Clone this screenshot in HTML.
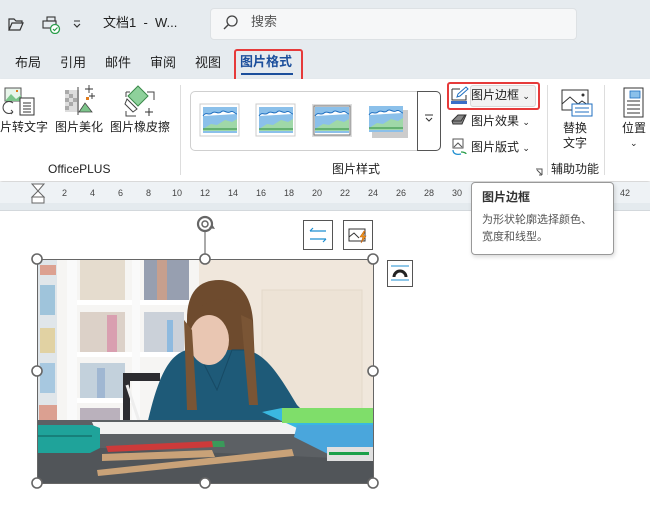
<!DOCTYPE html>
<html><head><meta charset="utf-8"><style>
*{margin:0;padding:0;box-sizing:border-box}
body{width:650px;height:506px;overflow:hidden;position:relative;background:#fff;font-family:"Liberation Sans","Noto Sans CJK SC",sans-serif;color:#222}
.abs{position:absolute}
.t{position:absolute;font-size:12px;white-space:nowrap;line-height:14px}
</style></head><body>
<div class="abs" style="left:0;top:0;width:650px;height:79px;background:#e6ebef"></div>
<svg class="abs" style="left:6px;top:14px" width="90" height="20">
<path d="M3 5h5l2 2h6v2H6l-3 7V5z M3 16l3-7h11l-3 7z" fill="none" stroke="#333" stroke-width="1.2"/>
<rect x="41" y="3" width="8" height="4" fill="none" stroke="#333" stroke-width="1.1"/>
<rect x="37" y="7" width="13" height="7" fill="none" stroke="#333" stroke-width="1.1"/>
<circle cx="49" cy="15" r="4.5" fill="#fff" stroke="#2a9d4a" stroke-width="1.3"/>
<path d="M47 15l1.5 1.5 3-3" fill="none" stroke="#2a9d4a" stroke-width="1.2"/>
<path d="M68 7h6" stroke="#333"/><path d="M68 10l3 3 3-3" fill="none" stroke="#333" stroke-width="1.2"/>
</svg>
<div class="t" style="left:103px;top:16px;font-size:13px">文档1 &nbsp;- &nbsp;W...</div>
<div class="abs" style="left:210px;top:8px;width:367px;height:32px;background:#f6f7f8;border:1px solid #dde1e4;border-radius:4px"></div>
<svg class="abs" style="left:222px;top:14px" width="18" height="18"><circle cx="10" cy="7" r="5" fill="none" stroke="#444" stroke-width="1.3"/><path d="M6.5 10.5L2 15" stroke="#444" stroke-width="1.4"/></svg>
<div class="t" style="left:251px;top:15px;font-size:13px;color:#555">搜索</div>
<div class="t" style="left:15px;top:56px;font-size:13px">布局</div>
<div class="t" style="left:60px;top:56px;font-size:13px">引用</div>
<div class="t" style="left:105px;top:56px;font-size:13px">邮件</div>
<div class="t" style="left:150px;top:56px;font-size:13px">审阅</div>
<div class="t" style="left:195px;top:56px;font-size:13px">视图</div>
<div class="t" style="left:240px;top:55px;font-size:13px;font-weight:bold;color:#1c4f9c">图片格式</div>
<div class="abs" style="left:241px;top:73px;width:52px;height:2px;background:#1c4f9c"></div>
<div class="abs" style="left:234px;top:49px;width:69px;height:36px;border:2px solid #e63a3a;border-radius:3px"></div>
<div class="abs" style="left:0;top:79px;width:650px;height:102px;background:#fff;box-shadow:0 2px 3px rgba(0,0,0,.18)"></div>
<svg class="abs" style="left:0;top:84px" width="180" height="36">
<rect x="5" y="4" width="16" height="13" fill="#e8f5ea" stroke="#555"/>
<path d="M5 17l6-7 5 5 5-4v6z" fill="#7cc48a"/>
<rect x="16" y="6" width="2" height="2" fill="#e07a1a"/>
<path d="M13 19a6 6 0 1 0 0 9M13 28l-2-2M13 28l-2 2" fill="none" stroke="#444"/>
<rect x="20" y="14" width="14" height="17" fill="#fff" stroke="#333"/>
<path d="M23 19h8M23 22h8M23 25h8M23 28h8" stroke="#333"/>
<rect x="65" y="6" width="14" height="22" fill="#ddd"/><rect x="65" y="6" width="4" height="4" fill="#aaa"/><rect x="69" y="10" width="4" height="4" fill="#aaa"/><rect x="65" y="14" width="4" height="4" fill="#aaa"/><rect x="73" y="14" width="4" height="4" fill="#aaa"/><rect x="69" y="18" width="4" height="4" fill="#aaa"/><rect x="65" y="22" width="4" height="4" fill="#aaa"/>
<path d="M78 3v28" stroke="#444"/><path d="M79 28l6-9 7 9z" fill="#7cc48a" stroke="#444" stroke-width=".8"/>
<rect x="86" y="13" width="3" height="3" fill="#e07a1a"/>
<path d="M89 1v8M85 5h8M92 9v6M89 12h6" stroke="#333" stroke-width=".9"/>
<path d="M126 8h4M126 8v5M147 8h7v8M126 27v5h10" fill="none" stroke="#444"/>
<path d="M128 12l10-10 10 10-10 10z" fill="#8ed19b" stroke="#3a8a4a"/>
<path d="M127 15l10 10-4 3-8-8z" fill="#fff" stroke="#444"/>
<path d="M149 24v8M145 28h8" stroke="#333"/>
</svg>
<div class="t" style="left:0;top:120px;font-size:12px">片转文字</div>
<div class="t" style="left:55px;top:120px;font-size:12px">图片美化</div>
<div class="t" style="left:110px;top:120px;font-size:12px">图片橡皮擦</div>
<div class="t" style="left:48px;top:162px;font-size:12px">OfficePLUS</div>
<div class="abs" style="left:180px;top:85px;width:1px;height:90px;background:#ddd"></div>
<div class="abs" style="left:190px;top:91px;width:251px;height:60px;border:1px solid #cfcfcf;border-radius:5px"></div>
<div class="abs" style="left:417px;top:91px;width:24px;height:60px;border:1px solid #555;border-radius:0 5px 5px 0;background:#fff"></div>
<svg class="abs" style="left:423px;top:113px" width="12" height="10"><path d="M2 2h8M3 5l3 3 3-3" fill="none" stroke="#333"/></svg>
<svg class="abs" style="left:195px;top:100px" width="220" height="42">
<defs><g id="pic"><rect x="0" y="0" width="34" height="26" fill="#8bc0ea"/><path d="M0 9c3-5 6 0 9-3s6 2 9-1 6 2 9 0 5 2 7 2" fill="#fff" stroke="#1f6fc0" stroke-width="1"/><path d="M0 22l8-5 6 1 8-5 7 2 5-3v12H0z" fill="#9fd8a8"/><path d="M0 22h34" stroke="#2a8a3a" stroke-width="1"/></g></defs>
<rect x="5" y="4" width="39" height="32" fill="#fff" stroke="#ccc"/><use href="#pic" x="8" y="7"/>
<rect x="61" y="4" width="39" height="32" fill="#fff" stroke="#ccc"/><use href="#pic" x="64" y="7"/>
<rect x="117" y="4" width="40" height="33" fill="#ddd"/><rect x="119" y="6" width="36" height="29" fill="#fff" stroke="#777"/><use href="#pic" x="120" y="7"/>
<rect x="177" y="10" width="36" height="28" fill="#ccc"/><use href="#pic" x="174" y="6"/>
</svg>
<div class="t" style="left:332px;top:162px">图片样式</div>
<div class="abs" style="left:447px;top:82px;width:93px;height:28px;border:2px solid #e63a3a;border-radius:3px"></div>
<div class="abs" style="left:470px;top:85px;width:66px;height:22px;background:#f2f2f2;border:1px solid #d8d8d8;border-radius:3px"></div>
<svg class="abs" style="left:450px;top:86px" width="20" height="20"><path d="M2 3h8M2 3v11h14V9" fill="none" stroke="#333"/><path d="M7 11l1-3 8-7 2 2-8 7z" fill="#fff" stroke="#1f6fc0"/><rect x="1" y="15" width="16" height="3" fill="#3a6fc8"/></svg>
<div class="t" style="left:471px;top:88px">图片边框 <span style="font-size:9px">⌄</span></div>
<svg class="abs" style="left:450px;top:112px" width="18" height="16"><path d="M2 9l6-6h8l-4 9H3z" fill="#888" stroke="#333"/><path d="M2 9h9l4-6" fill="none" stroke="#333"/></svg>
<div class="t" style="left:471px;top:114px">图片效果 <span style="font-size:9px">⌄</span></div>
<svg class="abs" style="left:450px;top:137px" width="18" height="20"><rect x="3" y="2" width="10" height="9" fill="#fff" stroke="#555"/><path d="M4 10l4-4 4 4" fill="none" stroke="#555"/><path d="M3 13c0 4 4 5 8 4" fill="none" stroke="#1f8fd0" stroke-width="1.3"/><path d="M11 15c3 0 5 1 5 2" fill="none" stroke="#2a9d4a" stroke-width="1.3"/></svg>
<div class="t" style="left:471px;top:140px">图片版式 <span style="font-size:9px">⌄</span></div>
<svg class="abs" style="left:535px;top:168px" width="8" height="8"><path d="M1 1h6v6M2 2l5 5M4 7h3" fill="none" stroke="#555"/></svg>
<div class="abs" style="left:547px;top:85px;width:1px;height:90px;background:#ddd"></div>
<svg class="abs" style="left:560px;top:88px" width="34" height="30"><rect x="2" y="2" width="26" height="20" fill="#fff" stroke="#333"/><path d="M2 16l8-7 8 7 4-3 6 4" fill="none" stroke="#333"/><circle cx="23" cy="7" r="1.5" fill="#333"/><rect x="12" y="16" width="20" height="12" fill="#fff" stroke="#1f6fc0"/><path d="M15 20h14M15 24h14" stroke="#1f6fc0"/></svg>
<div class="t" style="left:563px;top:121px;font-size:12px">替换</div>
<div class="t" style="left:563px;top:136px;font-size:12px">文字</div>
<div class="t" style="left:551px;top:162px">辅助功能</div>
<div class="abs" style="left:604px;top:85px;width:1px;height:90px;background:#ddd"></div>
<svg class="abs" style="left:622px;top:87px" width="24" height="32"><rect x="2" y="1" width="19" height="29" fill="#fff" stroke="#333"/><rect x="8" y="4" width="10" height="7" fill="#8bc0ea" stroke="#1f6fc0" stroke-width=".8"/><path d="M5 14h13M5 18h13M5 22h13M5 26h13" stroke="#333"/></svg>
<div class="t" style="left:622px;top:121px;font-size:12px">位置</div>
<div class="t" style="left:630px;top:136px;font-size:9px">⌄</div>
<div class="abs" style="left:0;top:182px;width:650px;height:28px;background:#e4eaee"></div>
<div class="abs" style="left:0;top:182px;width:650px;height:21px;background:#eef2f5"></div>
<div class="abs" style="left:0;top:210px;width:650px;height:1px;background:#d3d8dc"></div>
<svg class="abs" style="left:30px;top:183px" width="16" height="28"><path d="M2 1h12l-6 7z M2 14l6-6 6 6z" fill="#fff" stroke="#666"/><rect x="2" y="14" width="12" height="6" fill="#fff" stroke="#666"/></svg>
<div class="abs" style="left:0;top:188px;font-size:9px;color:#444">
<span class="abs" style="left:62px">2</span><span class="abs" style="left:90px">4</span><span class="abs" style="left:118px">6</span><span class="abs" style="left:146px">8</span><span class="abs" style="left:172px">10</span><span class="abs" style="left:200px">12</span><span class="abs" style="left:228px">14</span><span class="abs" style="left:256px">16</span><span class="abs" style="left:284px">18</span><span class="abs" style="left:312px">20</span><span class="abs" style="left:340px">22</span><span class="abs" style="left:368px">24</span><span class="abs" style="left:396px">26</span><span class="abs" style="left:424px">28</span><span class="abs" style="left:452px">30</span><span class="abs" style="left:620px">42</span>
</div>
<div class="abs" style="left:471px;top:182px;width:143px;height:73px;background:#fff;border:1px solid #999;border-radius:4px;box-shadow:1px 2px 4px rgba(0,0,0,.15)"></div>
<div class="t" style="left:482px;top:190px;font-weight:bold;color:#333">图片边框</div>
<div class="t" style="left:482px;top:213px;font-size:11px;color:#555">为形状轮廓选择颜色、</div>
<div class="t" style="left:482px;top:230px;font-size:11px;color:#555">宽度和线型。</div>
<div class="abs" style="left:303px;top:220px;width:30px;height:30px;border:1px solid #555;background:#fff"></div>
<svg class="abs" style="left:308px;top:227px" width="20" height="16"><path d="M2 4h16M2 4l3-3M2 12h16M18 12l-3 3" fill="none" stroke="#1f8fd0" stroke-width="1.2"/></svg>
<div class="abs" style="left:343px;top:220px;width:30px;height:30px;border:1px solid #555;background:#fff"></div>
<svg class="abs" style="left:348px;top:227px" width="22" height="18"><rect x="1" y="2" width="16" height="12" fill="#fff" stroke="#333"/><path d="M1 10l5-4 5 5" fill="none" stroke="#333"/><path d="M16 4l-4 6h3l-2 6 5-7h-3l2-5z" fill="#f29b1a" stroke="#c06010" stroke-width=".6"/></svg>
<div class="abs" style="left:387px;top:260px;width:26px;height:27px;border:1px solid #555;background:#fff"></div>
<svg class="abs" style="left:390px;top:263px" width="20" height="20"><path d="M1 3h18M1 17h18" stroke="#1f8fd0"/><path d="M4 14a6 6 0 0 1 12 0" fill="none" stroke="#222" stroke-width="3"/></svg>
<svg class="abs" style="left:194px;top:212px" width="24" height="48"><circle cx="11" cy="12" r="7" fill="none" stroke="#666" stroke-width="2.2"/><circle cx="11" cy="12" r="3" fill="none" stroke="#666" stroke-width="1.5"/><path d="M15 16l6 1-3-5z" fill="#666"/><path d="M11 20v28" stroke="#555"/></svg>
<svg class="abs" style="left:37px;top:260px" width="337" height="224" viewBox="0 0 337 224">
<rect width="337" height="224" fill="#f0e7dc"/>
<rect x="225" y="30" width="100" height="130" fill="#ede3d6" stroke="#e3d8ca"/>
<rect x="0" y="0" width="162" height="175" fill="#f6f5f3"/>
<rect x="0" y="0" width="20" height="175" fill="#e0e6ea"/>
<g opacity=".55">
<rect x="3" y="5" width="16" height="10" fill="#d96a4a"/><rect x="3" y="25" width="15" height="30" fill="#6aa9cf"/><rect x="3" y="68" width="15" height="25" fill="#e2c36a"/><rect x="3" y="103" width="15" height="30" fill="#7ab0d8"/><rect x="2" y="145" width="18" height="18" fill="#d8684a"/>
<rect x="43" y="0" width="45" height="40" fill="#d8c8b0"/><rect x="107" y="0" width="45" height="40" fill="#4b5a7a"/><rect x="120" y="0" width="10" height="40" fill="#a25a3a"/>
<rect x="43" y="52" width="45" height="40" fill="#c7b5a5"/><rect x="70" y="55" width="10" height="37" fill="#c35a7a"/><rect x="107" y="52" width="40" height="40" fill="#a9b5c5"/><rect x="130" y="60" width="6" height="32" fill="#3a8ad0"/>
<rect x="43" y="103" width="45" height="35" fill="#9bb5cb"/><rect x="60" y="108" width="8" height="30" fill="#5a86b8"/>
<rect x="43" y="148" width="40" height="26" fill="#8a7a90"/>
</g>
<rect x="30" y="0" width="10" height="175" fill="#fafafa"/><rect x="95" y="0" width="8" height="175" fill="#fafafa"/>
<rect x="40" y="40" width="55" height="5" fill="#fff"/><rect x="103" y="40" width="50" height="5" fill="#fff"/>
<rect x="40" y="92" width="55" height="5" fill="#fff"/><rect x="103" y="92" width="50" height="5" fill="#fff"/>
<rect x="40" y="138" width="55" height="5" fill="#fff"/>
<rect x="86" y="113" width="37" height="8" fill="#2c2c30"/><rect x="86" y="113" width="7" height="52" fill="#2c2c30"/>
<path d="M150 60c0-28 12-40 32-40s32 15 34 40l4 90h-74z" fill="#6e4b2e"/>
<path d="M110 165c8-35 18-70 40-75h60c20 5 32 25 50 55l20 20-140 5z" fill="#1e5a78"/>
<path d="M150 90l10 0 20 40 15-40h15" fill="none" stroke="#174a64" stroke-width="1"/>
<ellipse cx="172" cy="80" rx="20" ry="25" fill="#e9c6b2"/>
<path d="M150 65c2-30 14-42 32-42s30 14 32 42l-10-18c-8-10-30-10-40 0z" fill="#6e4b2e"/>
<path d="M147 60l3 90h10l-5-80zM204 55l8 90h9l-6-85z" fill="#7a5535"/>
<ellipse cx="97" cy="178" rx="10" ry="9" fill="#ecc8b4"/><ellipse cx="172" cy="182" rx="14" ry="7" fill="#ecc8b4"/>
<path d="M90 125l16 48" stroke="#eee" stroke-width="3"/>
<rect x="0" y="160" width="337" height="64" fill="#5c6064"/>
<path d="M0 185c100 5 200 8 337 15v24H0z" fill="#515559"/>
<path d="M55 162h215l5 12H60z" fill="#f2f2f2"/>
<path d="M0 165h55l8 3v20l-10 5H0z" fill="#1fa39a"/>
<path d="M0 176h55" stroke="#17807a" stroke-width="2"/>
<path d="M225 152l20 -4h92v20H260z" fill="#3ab8e0"/>
<rect x="245" y="148" width="92" height="15" fill="#7fde6a"/>
<path d="M260 165h77v32h-40l-40-20z" fill="#4aa6dc"/>
<rect x="290" y="187" width="47" height="14" fill="#e0e0e0"/><rect x="292" y="192" width="40" height="3" fill="#1aa04a"/>
<path d="M69 186l109-5 1 6-108 5z" fill="#cc3a3a"/><path d="M175 181h12l1 6h-12z" fill="#3a9a5a"/>
<path d="M65 194l110 -4 3 7-113 4z" fill="#c9a278"/>
<path d="M60 210l195-21 2 7-196 20z" fill="#c9a278"/>
</svg>
<div class="abs" style="left:37px;top:259px;width:337px;height:225px;border:1.5px solid #666"></div>
<svg class="abs" style="left:30px;top:252px" width="352" height="240">
<g fill="#fff" stroke="#666" stroke-width="1.6">
<circle cx="7" cy="7" r="5"/><circle cx="175" cy="7" r="5"/><circle cx="343" cy="7" r="5"/>
<circle cx="7" cy="119" r="5"/><circle cx="343" cy="119" r="5"/>
<circle cx="7" cy="231" r="5"/><circle cx="175" cy="231" r="5"/><circle cx="343" cy="231" r="5"/>
</g></svg>
</body></html>
